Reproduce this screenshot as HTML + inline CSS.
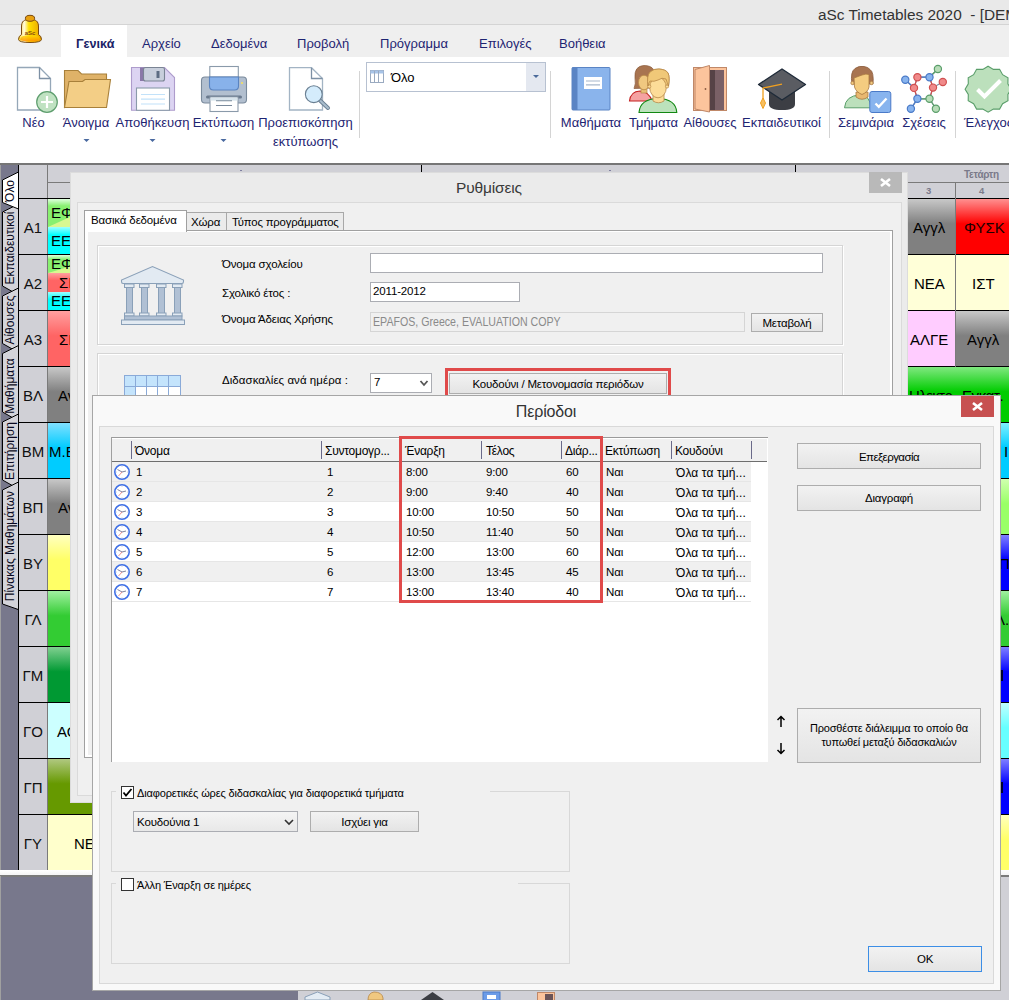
<!DOCTYPE html>
<html><head><meta charset="utf-8">
<style>
*{margin:0;padding:0;box-sizing:border-box}
html,body{width:1009px;height:1000px;overflow:hidden;background:#fff;font-family:"Liberation Sans",sans-serif}
.a{position:absolute}
.t{position:absolute;white-space:nowrap;line-height:1}
.rt{color:#1e2472;font-size:13px}
.c{position:absolute;overflow:hidden;font-size:15px;color:#000;line-height:1;white-space:nowrap}
.ft{position:absolute;font-size:12px;color:#000;white-space:nowrap;line-height:1;letter-spacing:-0.15px}
.btn{position:absolute;border:1px solid #adadad;background:linear-gradient(#f2f2f2,#e4e4e4);font-size:12px;text-align:center;color:#000;line-height:1;white-space:nowrap;letter-spacing:-0.2px}
</style></head>
<body>
<div class="a" style="left:0;top:0;width:1009px;height:25px;background:#e9e9e9;border-bottom:1px solid #d4d4d4"></div>
<div class="t" style="left:818px;top:7px;font-size:15.4px;color:#333">aSc Timetables 2020&nbsp; - [DEMO</div>
<div class="a" style="left:0;top:25px;width:1009px;height:32px;background:#efefef"></div>
<div class="a" style="left:61px;top:25px;width:66px;height:32px;background:#fff"></div>
<div class="t rt" style="left:76px;top:37.5px;font-weight:bold;color:#1a2266;font-size:12.6px">Γενικά</div>
<div class="t rt" style="left:142px;top:37px">Αρχείο</div>
<div class="t rt" style="left:211px;top:37px">Δεδομένα</div>
<div class="t rt" style="left:297px;top:37px">Προβολή</div>
<div class="t rt" style="left:380px;top:37px">Πρόγραμμα</div>
<div class="t rt" style="left:479px;top:37px">Επιλογές</div>
<div class="t rt" style="left:559px;top:37px">Βοήθεια</div>
<div class="a" style="left:0;top:57px;width:1009px;height:106px;background:#fff"></div>
<svg class="a" style="left:0;top:0" width="1009" height="165" viewBox="0 0 1009 165">
<!-- bell -->
<defs>
<linearGradient id="bg1" x1="0" y1="0" x2="1" y2="0"><stop offset="0" stop-color="#f8d020"/><stop offset="0.25" stop-color="#fffbe0"/><stop offset="0.45" stop-color="#ffe000"/><stop offset="1" stop-color="#e8a000"/></linearGradient>
<linearGradient id="bg2" x1="0" y1="0" x2="0" y2="1"><stop offset="0" stop-color="#ffd800"/><stop offset="1" stop-color="#ff8a00"/></linearGradient>
</defs>
<path d="M18.5 39.5 Q18.5 36 21.5 34.5 V27 C21.5 21 24 19.5 30 19.5 C36 19.5 38.5 21 38.5 27 V34.5 Q41.5 36 41.5 39.5 Q41 42.5 30 42.5 Q19 42.5 18.5 39.5 Z" fill="url(#bg1)" stroke="#7a4a10" stroke-width="1"/>
<path d="M20 39.5 Q21 36 25 35.5 H36 Q40 36.5 40 39.5 Q38 41.5 30 41.5 Q22 41.5 20 39.5 Z" fill="url(#bg2)" opacity="0.85"/>
<ellipse cx="30" cy="18.3" rx="4.6" ry="3" fill="#e8a010" stroke="#7a4a10" stroke-width="1"/>
<text x="30" y="35" font-size="6" font-weight="bold" font-family="Liberation Sans" fill="#8a4a10" text-anchor="middle">aSc</text>
<!-- New doc -->
<path d="M17.5 67.5 H39.5 L50.5 78.5 V110 H17.5 Z" fill="#fff" stroke="#95a7b8" stroke-width="1.3"/>
<path d="M39.5 67.5 V78.5 H50.5" fill="none" stroke="#7d90a4" stroke-width="1.3"/>
<circle cx="47" cy="102" r="10.3" fill="#c0e2c2" stroke="#5e9e6e" stroke-width="1.2"/>
<path d="M47 96 V108 M41 102 H53" stroke="#fff" stroke-width="2.2"/>
<!-- folder -->
<path d="M64.5 107.5 V70.5 H78 L81.5 74 H106.5 V80 Z" fill="#dfb268" stroke="#a8803a" stroke-width="1.1"/>
<path d="M64.5 107.5 L69 81.5 H82.5 L85 79.5 H110.5 L106.5 107.5 Z" fill="#f3ce86" stroke="#a8803a" stroke-width="1.1"/>
<!-- floppy -->
<path d="M131.5 67.5 H164.5 L174.5 77.5 V110.3 H131.5 Z" fill="#dcd4f2" stroke="#ae9ccc" stroke-width="1.1"/>
<rect x="140" y="67.5" width="5" height="13.5" fill="#8a78a8"/>
<rect x="143.5" y="67.5" width="21" height="13.5" rx="2" fill="#c8cfdc" stroke="#7a8494" stroke-width="1.1"/>
<rect x="156.5" y="71" width="3" height="7" fill="#5c6c82"/>
<rect x="136.5" y="88" width="33" height="22.3" fill="#fff" stroke="#8a9aaa" stroke-width="1.1"/>
<path d="M141 94.5 H165 M141 99.2 H165 M141 104 H165" stroke="#c2e2fa" stroke-width="1.2"/>
<!-- printer -->
<rect x="209.8" y="66.5" width="28.5" height="12" fill="#fff" stroke="#8a9aaa" stroke-width="1.1"/>
<rect x="201.5" y="77" width="45" height="26" rx="3.5" fill="#b2bfcf" stroke="#7a8a9c" stroke-width="1.1"/>
<path d="M209.5 77 H238.5 V86 Q238.5 90 234.5 90 H213.5 Q209.5 90 209.5 86 Z" fill="#88b2ea" stroke="#5a84c0" stroke-width="1.1"/>
<circle cx="242" cy="83" r="1.1" fill="#f4e060"/>
<rect x="206" y="95.5" width="36" height="3" rx="1.5" fill="#6a7a8e"/>
<rect x="210" y="97" width="28" height="14.5" fill="#fff" stroke="#8a9aaa" stroke-width="1.1"/><rect x="210.6" y="97.6" width="26.8" height="3" fill="#d8e4ec"/>
<path d="M216 100.8 H232 M216 105.5 H232" stroke="#7a8a9c" stroke-width="1.1"/>
<!-- preview -->
<path d="M289.5 67.7 H311.5 L322.5 78.5 V110 H289.5 Z" fill="#fff" stroke="#a3b4c4" stroke-width="1.3"/>
<path d="M311.5 67.7 V78.5 H322.5" fill="none" stroke="#7d90a4" stroke-width="1.3"/>
<path d="M319 99.5 L328 108" stroke="#6a7f92" stroke-width="4" stroke-linecap="round"/>
<path d="M319 99.5 L328 108" stroke="#a8bccc" stroke-width="2.2" stroke-linecap="round"/>
<circle cx="313.8" cy="94.2" r="8.4" fill="#d4ecfc" stroke="#6a7f92" stroke-width="1.1"/>
<!-- separators -->
<rect x="359" y="71" width="1" height="67" fill="#d4d4d4"/>
<rect x="550" y="71" width="1" height="67" fill="#d4d4d4"/>
<rect x="829" y="71" width="1" height="67" fill="#d4d4d4"/>
<rect x="955" y="71" width="1" height="67" fill="#d4d4d4"/>
<!-- combo -->
<rect x="366.5" y="62.5" width="179" height="29" fill="#fff" stroke="#b7c1d1" stroke-width="1"/>
<rect x="526" y="63" width="19" height="28" fill="#e4e8f0"/>
<path d="M533 75 H539 L536 78 Z" fill="#4a6a9a"/>
<rect x="370.5" y="70.5" width="13" height="12" fill="#fff" stroke="#9aaac0" stroke-width="1"/>
<rect x="370.5" y="70.5" width="13" height="3" fill="#a8c4e8"/>
<path d="M374.5 71 V82.5 M378.5 71 V82.5" stroke="#9aaac0" stroke-width="1"/>
<!-- book -->
<rect x="572" y="67.5" width="38" height="42.5" rx="1" fill="#8ab4ec" stroke="#5a84c4" stroke-width="1"/>
<rect x="572" y="67.5" width="5.5" height="42.5" fill="#5a84c4"/>
<rect x="584" y="77" width="18" height="12" fill="#fff"/>
<path d="M586 81 H600 M586 84.8 H600" stroke="#a8b8cc" stroke-width="1.2"/>
<!-- people -->
<path d="M629.5 101 Q630.5 91.5 640 91 Q649 91.5 652 101 Z" fill="#f5a2a2" stroke="#c42020" stroke-width="1.1"/>
<path d="M634 88.5 Q636 84 635 78 Q634 66 644 65.5 Q651 65.5 653.5 69.5 L652 88 Z" fill="#a87450" stroke="#8a5a3a" stroke-width="0.7"/>
<rect x="641" y="88" width="6" height="5" fill="#e8c078" stroke="#b88848" stroke-width="0.7"/>
<ellipse cx="644" cy="82.5" rx="5.5" ry="7.3" fill="#f0c880" stroke="#b88848" stroke-width="0.8"/>
<path d="M639 112.5 Q640 99 658 98.5 Q676 99 676.8 112.5 Z" fill="#bce2bc" stroke="#118811" stroke-width="1.1"/>
<path d="M653 94 V101 Q658.5 104.5 664 101 V94 Z" fill="#fcdc98" stroke="#b88848" stroke-width="0.8"/>
<path d="M648 86 Q646.5 76 650 72 Q654 68.5 659 69 Q666 69.5 668 73 Q670 77 668.5 86 Z" fill="#f0c878" stroke="#b88848" stroke-width="0.8"/>
<ellipse cx="658" cy="87.5" rx="8.3" ry="10.3" fill="#fcdc98" stroke="#b88848" stroke-width="0.8"/>
<circle cx="649.3" cy="86.5" r="1.6" fill="#fcdc98" stroke="#b88848" stroke-width="0.7"/>
<circle cx="667" cy="86.5" r="1.6" fill="#fcdc98" stroke="#b88848" stroke-width="0.7"/>
<path d="M648 86 Q646.5 76 650 72 Q654 68.5 659 69 Q666 69.5 668 73 Q670 77 668.5 86 Q667 82 666 79 Q662 77 658 80 Q654 82 650 81 Q648.5 83 648 86 Z" fill="#f0c878" stroke="#b88848" stroke-width="0.8"/>
<!-- door -->
<rect x="693.5" y="67.5" width="33" height="43" fill="#fcc49c" stroke="#c08868" stroke-width="1"/>
<rect x="710" y="70" width="14" height="40" fill="#7a6066"/>
<rect x="710" y="70" width="5" height="40" fill="#564246"/>
<path d="M695 69.5 L709.5 65.5 V112 L695 109 Z" fill="#fcc49c" stroke="#c08868" stroke-width="1"/>
<circle cx="705.5" cy="89" r="0.9" fill="#8a5a40"/>
<!-- cap -->
<path d="M769 90 V104 Q769 110 782 110 Q795 110 795 104 V90 Z" fill="#3c3e44"/>
<path d="M758.5 84.5 L782 69 L805.5 84.5 L782 100 Z" fill="#5a5c62" stroke="#1e2a38" stroke-width="1.3" stroke-linejoin="round"/>
<path d="M782 84.2 L763 88 V100" fill="none" stroke="#f0a020" stroke-width="1.3"/>
<path d="M763 98 L760.5 103 L763 108.5 L765.5 103 Z" fill="#f8c060" stroke="#f0a020" stroke-width="1"/>
<!-- seminar person -->
<path d="M844.5 107.8 Q845.5 95.5 860 95 Q870 95 871 107.8 Z" fill="#bce0bc" stroke="#5a9e6a" stroke-width="1"/>
<path d="M856 92 V97 Q862 101.5 868 97 V92 Z" fill="#e8b870" stroke="#a87840" stroke-width="0.8"/>
<path d="M852 84 Q850 72 855 68.5 Q859 65.5 864 66.5 Q868 67 870 69.5 Q874 72 873 84 Z" fill="#a87450" stroke="#8a5a3a" stroke-width="0.8"/>
<circle cx="852.5" cy="83" r="1.7" fill="#f0c880" stroke="#a87840" stroke-width="0.7"/>
<circle cx="871.5" cy="83" r="1.7" fill="#f0c880" stroke="#a87840" stroke-width="0.7"/>
<path d="M854 78 Q858 76.5 862 75 Q866 73.5 869 74.5 V87 Q868 92 862 94.5 Q856 92 854.5 87 Z" fill="#f4cc80" stroke="#a87840" stroke-width="0.8"/>
<rect x="869.8" y="91.5" width="21" height="21" rx="2.2" fill="#88b4ee" stroke="#4a7ac8" stroke-width="1"/>
<path d="M875.5 103.5 L878.8 106.8 L886.5 98.5" fill="none" stroke="#fff" stroke-width="2.4"/>
<!-- molecule -->
<g stroke-width="1.2">
<path d="M905.3 79.8 L914 87.9 L917.4 77.2 L929.5 77.2 L933 87.6 L929.5 98.8 L917.4 98.8 L914 87.9 M929.5 77.2 L937.9 69 M933 87.6 L942.8 82 M917.4 98.8 L910.9 108.8 M929.5 98.8 L935.9 108.8" stroke="#7d8ea0" fill="none"/>
<path d="M917.4 77.2 L914 87.9 L917.4 98.8" stroke="#d05050" fill="none"/>
<path d="M929.5 77.2 L933 87.6 L929.5 98.8" stroke="#d05050" fill="none"/>
<path d="M917.4 98.8 L929.5 98.8 L935.9 108.8 M929.5 77.2 L937.9 69" stroke="#5a9e6a" fill="none"/>
<path d="M905.3 79.8 L914 87.9 M917.4 98.8 L910.9 108.8 M917.4 77.2 L929.5 77.2" stroke="#4a7ac8" fill="none"/>
<circle cx="905.3" cy="79.8" r="3.6" fill="#88b4ee" stroke="#4a7ac8"/>
<circle cx="917.4" cy="77.2" r="3.6" fill="#f08a8a" stroke="#d05050"/>
<circle cx="929.5" cy="77.2" r="3.6" fill="#88b4ee" stroke="#4a7ac8"/>
<circle cx="937.9" cy="69" r="3.6" fill="#b8dcb8" stroke="#5a9e6a"/>
<circle cx="914" cy="87.9" r="3.6" fill="#f08a8a" stroke="#d05050"/>
<circle cx="933" cy="87.6" r="3.6" fill="#f08a8a" stroke="#d05050"/>
<circle cx="942.8" cy="82" r="3.6" fill="#f08a8a" stroke="#d05050"/>
<circle cx="917.4" cy="98.8" r="3.6" fill="#88b4ee" stroke="#4a7ac8"/>
<circle cx="929.5" cy="98.8" r="3.6" fill="#b8dcb8" stroke="#5a9e6a"/>
<circle cx="910.9" cy="108.8" r="3.6" fill="#88b4ee" stroke="#4a7ac8"/>
<circle cx="935.9" cy="108.8" r="3.6" fill="#b8dcb8" stroke="#5a9e6a"/>
</g>
<!-- badge -->
<path id="badge" d="M988.1 66.2 L993.4 69.4 L999.6 69.3 L1002.6 74.7 L1008.0 77.7 L1007.9 83.9 L1011.1 89.2 L1007.9 94.5 L1008.0 100.7 L1002.6 103.7 L999.6 109.1 L993.4 109.0 L988.1 112.2 L982.8 109.0 L976.6 109.1 L973.6 103.7 L968.2 100.7 L968.3 94.5 L965.1 89.2 L968.3 83.9 L968.2 77.7 L973.6 74.7 L976.6 69.3 L982.8 69.4 Z" fill="#bce0bc" stroke="#5a9e6a" stroke-width="1.1"/>
<path d="M977.5 89.5 L984.5 96.5 L1000.5 80.5" fill="none" stroke="#fff" stroke-width="4"/>
<!-- dropdown arrows -->
<path d="M83.5 139 H89.5 L86.5 142 Z M149.5 139 H155.5 L152.5 142 Z M220.5 139 H226.5 L223.5 142 Z" fill="#4a6aa0"/>
</svg>

<div class="t" style="left:391px;top:71px;font-size:13px;color:#000">Όλο</div>
<div class="t rt" style="left:-66.5px;width:200px;text-align:center;top:116px">Νέο</div>
<div class="t rt" style="left:-14px;width:200px;text-align:center;top:116px">Άνοιγμα</div>
<div class="t rt" style="left:52.5px;width:200px;text-align:center;top:116px">Αποθήκευση</div>
<div class="t rt" style="left:123.5px;width:200px;text-align:center;top:116px">Εκτύπωση</div>
<div class="t rt" style="left:205.5px;width:200px;text-align:center;top:116px">Προεπισκόπηση</div>
<div class="t rt" style="left:205.5px;width:200px;text-align:center;top:135px">εκτύπωσης</div>
<div class="t rt" style="left:491px;width:200px;text-align:center;top:116px">Μαθήματα</div>
<div class="t rt" style="left:553.5px;width:200px;text-align:center;top:116px">Τμήματα</div>
<div class="t rt" style="left:610px;width:200px;text-align:center;top:116px">Αίθουσες</div>
<div class="t rt" style="left:681.5px;width:200px;text-align:center;top:116px">Εκπαιδευτικοί</div>
<div class="t rt" style="left:766px;width:200px;text-align:center;top:116px">Σεμινάρια</div>
<div class="t rt" style="left:824px;width:200px;text-align:center;top:116px">Σχέσεις</div>
<div class="t rt" style="left:964px;top:116px">Έλεγχος</div>
<div class="a" style="left:0;top:163px;width:1009px;height:2px;background:#767676"></div>
<div class="a" style="left:0;top:165px;width:1009px;height:705px;background:#d0d0d6"></div>
<div class="a" style="left:0;top:165px;width:1px;height:711px;background:#a0a0a0"></div>
<div class="a" style="left:1px;top:165px;width:17px;height:705px;background:#78788c"></div>
<div class="a" style="left:18px;top:165px;width:1px;height:705px;background:#000"></div>
<div class="a" style="left:47px;top:165px;width:1px;height:705px;background:#7a7a7a"></div>
<div class="a" style="left:48px;top:182px;width:961px;height:1px;background:#7a7a7a"></div>
<div class="a" style="left:19px;top:198px;width:990px;height:1px;background:#000"></div>
<div class="t" style="left:19px;width:28px;text-align:center;top:220px;font-size:15px;color:#111">Α1</div>
<div class="a" style="left:19px;top:254px;width:990px;height:1px;background:#000"></div>
<div class="t" style="left:19px;width:28px;text-align:center;top:276px;font-size:15px;color:#111">Α2</div>
<div class="a" style="left:19px;top:310px;width:990px;height:1px;background:#000"></div>
<div class="t" style="left:19px;width:28px;text-align:center;top:332px;font-size:15px;color:#111">Α3</div>
<div class="a" style="left:19px;top:366px;width:990px;height:1px;background:#000"></div>
<div class="t" style="left:19px;width:28px;text-align:center;top:388px;font-size:15px;color:#111">ΒΛ</div>
<div class="a" style="left:19px;top:422px;width:990px;height:1px;background:#000"></div>
<div class="t" style="left:19px;width:28px;text-align:center;top:444px;font-size:15px;color:#111">ΒΜ</div>
<div class="a" style="left:19px;top:478px;width:990px;height:1px;background:#000"></div>
<div class="t" style="left:19px;width:28px;text-align:center;top:500px;font-size:15px;color:#111">ΒΠ</div>
<div class="a" style="left:19px;top:534px;width:990px;height:1px;background:#000"></div>
<div class="t" style="left:19px;width:28px;text-align:center;top:556px;font-size:15px;color:#111">ΒΥ</div>
<div class="a" style="left:19px;top:590px;width:990px;height:1px;background:#000"></div>
<div class="t" style="left:19px;width:28px;text-align:center;top:612px;font-size:15px;color:#111">ΓΛ</div>
<div class="a" style="left:19px;top:646px;width:990px;height:1px;background:#000"></div>
<div class="t" style="left:19px;width:28px;text-align:center;top:668px;font-size:15px;color:#111">ΓΜ</div>
<div class="a" style="left:19px;top:702px;width:990px;height:1px;background:#000"></div>
<div class="t" style="left:19px;width:28px;text-align:center;top:724px;font-size:15px;color:#111">ΓΟ</div>
<div class="a" style="left:19px;top:758px;width:990px;height:1px;background:#000"></div>
<div class="t" style="left:19px;width:28px;text-align:center;top:780px;font-size:15px;color:#111">ΓΠ</div>
<div class="a" style="left:19px;top:814px;width:990px;height:1px;background:#000"></div>
<div class="t" style="left:19px;width:28px;text-align:center;top:836px;font-size:15px;color:#111">ΓΥ</div>
<div class="a" style="left:19px;top:870px;width:990px;height:1px;background:#000"></div>
<div class="c" style="left:48px;top:199px;width:44px;height:28px;background:linear-gradient(#e0ffe0,#88f070 25%)"><span class="a" style="left:0px;top:7px;color:#000"></span></div>
<svg class="a" style="left:48px;top:199px" width="44" height="28"><path d="M0 28 L44 8 V28 Z" fill="#d8f890"/></svg>
<div class="t" style="left:51px;top:205px;font-size:15px;color:#000">ΕΦ</div>
<div class="c" style="left:48px;top:227px;width:44px;height:27px;background:linear-gradient(#a0ffff,#00ffff 30%)"><span class="a" style="left:3px;top:6px;color:#000">ΕΕ</span></div>
<div class="c" style="left:48px;top:255px;width:44px;height:18px;background:linear-gradient(#e0ffe0,#88f070 25%)"><span class="a" style="left:0px;top:2px;color:#000"></span></div>
<svg class="a" style="left:48px;top:255px" width="44" height="18"><path d="M0 18 L44 5 V18 Z" fill="#d8f890"/></svg>
<div class="t" style="left:51px;top:256px;font-size:15px;color:#000">ΕΦ</div>
<div class="c" style="left:48px;top:273px;width:44px;height:19px;background:linear-gradient(#ffa0a0,#ff6464 40%)"><span class="a" style="left:11px;top:2px;color:#000">ΣΙ</span></div>
<div class="c" style="left:48px;top:292px;width:44px;height:18px;background:linear-gradient(#a0ffff,#00ffff 40%)"><span class="a" style="left:3px;top:1px;color:#000">ΕΕ</span></div>
<div class="c" style="left:48px;top:311px;width:44px;height:55px;background:linear-gradient(#ffa0a0,#ff6464 45%)"><span class="a" style="left:11px;top:21px;color:#000">ΣΙ</span></div>
<div class="c" style="left:48px;top:367px;width:44px;height:55px;background:linear-gradient(#c8c8c8,#808080 45%)"><span class="a" style="left:10px;top:21px;color:#000">Αν</span></div>
<div class="c" style="left:48px;top:423px;width:44px;height:55px;background:linear-gradient(#80e0ff,#00ccff 45%)"><span class="a" style="left:1px;top:21px;color:#000">Μ.Ε</span></div>
<div class="c" style="left:48px;top:479px;width:44px;height:55px;background:linear-gradient(#c8c8c8,#808080 45%)"><span class="a" style="left:10px;top:21px;color:#000">Αν</span></div>
<div class="c" style="left:48px;top:535px;width:44px;height:55px;background:linear-gradient(#ffffc0,#ffff66 45%)"><span class="a" style="left:0px;top:21px;color:#000"></span></div>
<div class="c" style="left:48px;top:591px;width:44px;height:55px;background:linear-gradient(#a0f0a0,#33cc33 45%)"><span class="a" style="left:0px;top:21px;color:#000"></span></div>
<div class="c" style="left:48px;top:647px;width:44px;height:55px;background:linear-gradient(#80d090,#009933 45%)"><span class="a" style="left:0px;top:21px;color:#000"></span></div>
<div class="c" style="left:48px;top:703px;width:44px;height:55px;background:#ccffff"><span class="a" style="left:9px;top:21px;color:#000">ΑΟ</span></div>
<div class="c" style="left:48px;top:759px;width:44px;height:55px;background:linear-gradient(#b0c880,#669900 45%)"><span class="a" style="left:0px;top:21px;color:#000"></span></div>
<div class="c" style="left:48px;top:815px;width:44px;height:55px;background:#ffffcc"><span class="a" style="left:26px;top:21px;color:#000">ΝΕ</span></div>
<div class="c" style="left:908px;top:199px;width:47px;height:55px;background:linear-gradient(#c8c8c8,#808080 45%)"><span class="a" style="left:5px;top:21px;color:#000">Αγγλ</span></div>
<div class="c" style="left:956px;top:199px;width:53px;height:55px;background:linear-gradient(#ff9090,#ff0000 45%)"><span class="a" style="left:8px;top:21px;color:#200000">ΦΥΣΚ</span></div>
<div class="c" style="left:908px;top:255px;width:47px;height:55px;background:#ffffd8"><span class="a" style="left:6px;top:21px;color:#000">ΝΕΑ</span></div>
<div class="c" style="left:956px;top:255px;width:53px;height:55px;background:#ffffd8"><span class="a" style="left:16px;top:21px;color:#000">ΙΣΤ</span></div>
<div class="c" style="left:908px;top:311px;width:47px;height:55px;background:#ffccff"><span class="a" style="left:2px;top:21px;color:#000">ΑΛΓΕ</span></div>
<div class="c" style="left:956px;top:311px;width:53px;height:55px;background:linear-gradient(#c8c8c8,#808080 45%)"><span class="a" style="left:11px;top:21px;color:#000">Αγγλ</span></div>
<div class="a" style="left:955px;top:182px;width:1px;height:185px;background:#7a7a7a"></div>
<div class="c" style="left:908px;top:367px;width:101px;height:55px;background:linear-gradient(#80e880,#00cc00 45%)"><span class="a" style="left:0px;top:21px;color:#000"></span></div>
<div class="t" style="left:909px;top:388px;font-size:15px;letter-spacing:-0.6px">Ηλεκτρ.</div>
<div class="t" style="left:962px;top:388px;font-size:15px;letter-spacing:-0.4px">Εγκατ.</div>
<div class="c" style="left:1001px;top:423px;width:8px;height:55px;background:linear-gradient(#80f0ff,#00ccff 45%)"><span class="a" style="left:3px;top:21px;color:#000">Ι</span></div>
<div class="c" style="left:1001px;top:479px;width:8px;height:55px;background:linear-gradient(#d0ffb0,#99ff66 45%)"><span class="a" style="left:0px;top:21px;color:#000"></span></div>
<div class="c" style="left:1001px;top:535px;width:8px;height:55px;background:linear-gradient(#8080ff,#0000ff 45%)"><span class="a" style="left:-2px;top:21px;color:#000">Π</span></div>
<div class="c" style="left:1001px;top:591px;width:8px;height:55px;background:linear-gradient(#a0f0a0,#33cc33 45%)"><span class="a" style="left:-6px;top:21px;color:#000">Λ.</span></div>
<div class="c" style="left:1001px;top:647px;width:8px;height:55px;background:linear-gradient(#8080ff,#0000ff 45%)"><span class="a" style="left:0px;top:21px;color:#000"></span></div>
<div class="c" style="left:1001px;top:703px;width:8px;height:55px;background:linear-gradient(#c0ffff,#66ffff 45%)"><span class="a" style="left:0px;top:21px;color:#000"></span></div>
<div class="c" style="left:1001px;top:759px;width:8px;height:55px;background:linear-gradient(#8080ff,#0000ff 45%)"><span class="a" style="left:0px;top:21px;color:#000"></span></div>
<div class="c" style="left:1001px;top:815px;width:8px;height:55px;background:linear-gradient(#ffffc0,#ffff66 45%)"><span class="a" style="left:0px;top:21px;color:#000"></span></div>
<div class="a" style="left:1001px;top:670px;width:2px;height:11px;background:#000030"></div>
<div class="a" style="left:1001px;top:782px;width:2px;height:11px;background:#000030"></div>
<div class="a" style="left:421px;top:165px;width:1px;height:7px;background:#000"></div>
<div class="a" style="left:795px;top:165px;width:1px;height:7px;background:#000"></div>
<div class="a" style="left:240px;top:170px;width:2px;height:1px;background:#8080a0"></div>
<div class="a" style="left:609px;top:170px;width:2px;height:1px;background:#8080a0"></div>
<div class="t" style="left:964px;top:170px;font-size:10px;font-weight:bold;color:#7a7a8a;letter-spacing:-0.3px">Τετάρτη</div>
<div class="t" style="left:926px;top:186px;font-size:9.5px;font-weight:bold;color:#7a7a8a">3</div>
<div class="t" style="left:979px;top:186px;font-size:9.5px;font-weight:bold;color:#7a7a8a">4</div>
<div class="a" style="left:0;top:870px;width:1009px;height:5px;background:linear-gradient(#fff,#f4f4f4)"></div>
<div class="a" style="left:0;top:875px;width:1009px;height:2px;background:#7a7a7a"></div>
<div class="a" style="left:0;top:877px;width:298px;height:123px;background:#78788c"></div>
<div class="a" style="left:298px;top:877px;width:711px;height:123px;background:#d0d0d6"></div>
<div class="a" style="left:0;top:876px;width:1px;height:124px;background:#a0a0a0"></div>
<svg class="a" style="left:0;top:0" width="20" height="1000" viewBox="0 0 20 1000">
<path d="M18.5 204 L2.5 212 V286 L18.5 295" fill="#d4d4da" stroke="#000" stroke-width="1"/>
<path d="M18.5 288 L2.5 296 V343.5 L18.5 352.5" fill="#d4d4da" stroke="#000" stroke-width="1"/>
<path d="M18.5 345.5 L2.5 353.5 V412 L18.5 421" fill="#d4d4da" stroke="#000" stroke-width="1"/>
<path d="M18.5 414 L2.5 422 V480 L18.5 489" fill="#d4d4da" stroke="#000" stroke-width="1"/>
<path d="M18.5 482 L2.5 490 V604 L18.5 609.6" fill="#d4d4da" stroke="#000" stroke-width="1"/>
<path d="M18.5 172 L2.5 180 V202.5 L18.5 209" fill="#fff" stroke="#000" stroke-width="1"/>
</svg>
<div class="a" style="left:18px;top:165px;width:1px;height:705px;background:#000"></div>
<div class="t" style="left:-90px;width:200px;text-align:center;top:185px;font-size:12px;color:#080820;transform:rotate(-90deg)">Όλο</div>
<div class="t" style="left:-90px;width:200px;text-align:center;top:242px;font-size:12px;color:#080820;transform:rotate(-90deg)">Εκπαιδευτικοί</div>
<div class="t" style="left:-90px;width:200px;text-align:center;top:314px;font-size:12px;color:#080820;transform:rotate(-90deg)">Αίθουσες</div>
<div class="t" style="left:-90px;width:200px;text-align:center;top:380px;font-size:12px;color:#080820;transform:rotate(-90deg)">Μαθήματα</div>
<div class="t" style="left:-90px;width:200px;text-align:center;top:445px;font-size:12px;color:#080820;transform:rotate(-90deg)">Επιτήρηση</div>
<div class="t" style="left:-90px;width:200px;text-align:center;top:540px;font-size:12px;color:#080820;transform:rotate(-90deg)">Πίνακας Μαθημάτων</div>
<svg class="a" style="left:298px;top:991px" width="300" height="9" viewBox="298 991 300 9">
<path d="M305 997 L317.5 992 L330 997 V1000 H305 Z" fill="#e4ecf4" stroke="#8aa0b8" stroke-width="1"/>
<path d="M368 1000 Q368 993 374 992 Q382 992 383 998 V1000 Z" fill="#f0c880" stroke="#b88848" stroke-width="0.8"/>
<path d="M421 1000 L432.5 992 L444 1000 Z" fill="#3c3e44"/>
<rect x="483" y="992" width="17" height="9" fill="#6c9ce8" stroke="#4a7ac8"/><rect x="487" y="995" width="9" height="4" fill="#fff"/>
<rect x="537.5" y="992.5" width="17" height="9" fill="#fcc49c" stroke="#c08868"/><rect x="545" y="994" width="8" height="7" fill="#6a5458"/>
</svg>
<div class="a" style="left:70px;top:172px;width:838px;height:631px;background:#ebebeb;border:1px solid #dcdcdc;"></div>
<div class="ft" style="left:289px;width:400px;text-align:center;top:180px;font-size:15.5px;color:#3a3a3a;">Ρυθμίσεις</div>
<div class="a" style="left:869px;top:172px;width:33px;height:21px;background:#b9b9b9;"></div>
<svg class="a" style="left:869px;top:172px" width="33" height="21"><path d="M12.0 7.0 L21.0 14.0 M21.0 7.0 L12.0 14.0" stroke="#fff" stroke-width="2.6"/></svg>
<div class="a" style="left:77px;top:202px;width:825px;height:594px;background:#f0f0f0;border:1px solid #dadada;"></div>
<div class="a" style="left:186px;top:212px;width:41px;height:19px;background:#ebebeb;border:1px solid #a8a8a8;"></div>
<div class="a" style="left:226px;top:212px;width:118px;height:19px;background:#ebebeb;border:1px solid #a8a8a8;"></div>
<div class="ft" style="left:191px;top:217px;font-size:11.5px;color:#000;">Χώρα</div>
<div class="ft" style="left:232px;top:217px;font-size:11.3px;color:#000;">Τύπος προγράμματος</div>
<div class="a" style="left:84px;top:230px;width:809px;height:528px;background:#fff;border:1px solid #a0a0a0;"></div>
<div class="a" style="left:88px;top:232px;width:802px;height:523px;background:#f0f0f0;"></div>
<div class="a" style="left:84px;top:210px;width:103px;height:22px;background:#fff;border:1px solid #a0a0a0;border-bottom:none"></div>
<div class="ft" style="left:91px;top:215px;font-size:11.5px;color:#000;">Βασικά δεδομένα</div>
<div class="a" style="left:97px;top:245px;width:746px;height:100px;background:none;border:1px solid #d5d5d5;box-shadow:inset 1px 1px 0 #fff,1px 1px 0 #fff"></div>
<div class="a" style="left:97px;top:353px;width:746px;height:47px;background:none;border:1px solid #d5d5d5;box-shadow:inset 1px 1px 0 #fff,1px 1px 0 #fff"></div>
<div class="ft" style="left:222px;top:259px;font-size:11.5px;color:#000;">Όνομα σχολείου</div>
<div class="ft" style="left:222px;top:288px;font-size:11.5px;color:#000;">Σχολικό έτος :</div>
<div class="ft" style="left:222px;top:314px;font-size:11.5px;color:#000;">Όνομα Άδειας Χρήσης</div>
<div class="ft" style="left:222px;top:375px;font-size:11.5px;color:#000;letter-spacing:0.05px">Διδασκαλίες ανά ημέρα :</div>
<div class="a" style="left:370px;top:253px;width:453px;height:20px;background:#fff;border:1px solid #abadb3;"></div>
<div class="a" style="left:370px;top:282px;width:150px;height:20px;background:#fff;border:1px solid #abadb3;"></div>
<div class="ft" style="left:373px;top:286px;font-size:11.5px;color:#000;">2011-2012</div>
<div class="a" style="left:370px;top:312px;width:375px;height:20px;background:#f0f0f0;border:1px solid #d5d5d5;"></div>
<div class="ft" style="left:373px;top:316px;font-size:12px;color:#8a8a8a;letter-spacing:0;transform:scaleX(0.885);transform-origin:0 0">EPAFOS, Greece, EVALUATION COPY</div>
<div class="btn" style="left:751px;top:313px;width:72px;height:19px;border-color:#adadad;font-size:11.5px;padding-top:3.5px">Μεταβολή</div>
<div class="a" style="left:370px;top:373px;width:62px;height:20px;background:#fff;border:1px solid #abadb3;"></div>
<div class="ft" style="left:374px;top:377px;font-size:11.5px;color:#000;">7</div>
<svg class="a" style="left:419px;top:379px" width="10" height="8"><path d="M1.5 2 L5 6 L8.5 2" fill="none" stroke="#555" stroke-width="1.8"/></svg>
<div class="a" style="left:445px;top:368px;width:226px;height:30px;background:none;border:3px solid #e04a4a"></div>
<div class="btn" style="left:449px;top:373px;width:218px;height:21px;border-color:#adadad;font-size:11.5px;padding-top:4.5px">Κουδούνι / Μετονομασία περιόδων</div>
<svg class="a" style="left:118px;top:262px" width="70" height="66" viewBox="118 262 70 66">
<path d="M123 283.5 Q121.5 283.5 121.5 281.5 V280 L152.5 266.5 L183.5 280 V281.5 Q183.5 283.5 182 283.5 Z" fill="#e2eaf2" stroke="#8aa0b8" stroke-width="1.1"/>
<g stroke="#8aa0b8" stroke-width="1">
<rect x="126.5" y="287.5" width="6" height="26" fill="#b0c0d4"/><rect x="141.5" y="287.5" width="6" height="26" fill="#b0c0d4"/><rect x="158.5" y="287.5" width="6" height="26" fill="#b0c0d4"/><rect x="174.5" y="287.5" width="6" height="26" fill="#b0c0d4"/>
<rect x="124.5" y="284" width="9.5" height="3.5" fill="#e2eaf2"/><rect x="139.5" y="284" width="9.5" height="3.5" fill="#e2eaf2"/><rect x="156.5" y="284" width="9.5" height="3.5" fill="#e2eaf2"/><rect x="172.5" y="284" width="9.5" height="3.5" fill="#e2eaf2"/>
<rect x="124.5" y="313" width="9.5" height="3" fill="#e2eaf2"/><rect x="139.5" y="313" width="9.5" height="3" fill="#e2eaf2"/><rect x="156.5" y="313" width="9.5" height="3" fill="#e2eaf2"/><rect x="172.5" y="313" width="9.5" height="3" fill="#e2eaf2"/>
<rect x="124.5" y="316" width="57.5" height="4" fill="#b0c0d4"/>
<rect x="121.5" y="320" width="63" height="4.5" fill="#e2eaf2"/>
</g>
</svg>
<svg class="a" style="left:124px;top:375px" width="58" height="20" viewBox="124 375 58 20">
<rect x="124.5" y="375.5" width="56" height="30" fill="#fff" stroke="#8aaad8" stroke-width="1"/>
<rect x="124.5" y="375.5" width="56" height="11" fill="#c4e4fc" stroke="#8aaad8" stroke-width="1"/>
<rect x="124.5" y="375.5" width="11" height="30" fill="#c4e4fc" stroke="#8aaad8" stroke-width="1"/>
<path d="M135.5 375 V395 M146.5 375 V395 M157.5 375 V395 M168.5 375 V395 M124 386.5 H181" stroke="#8aaad8" stroke-width="1"/>
</svg>
<div class="a" style="left:92px;top:395px;width:909px;height:596px;background:#f9f9f9;border:1px solid #a6a6a6;"></div>
<div class="ft" style="left:346px;width:400px;text-align:center;top:404px;font-size:16px;color:#333;">Περίοδοι</div>
<div class="a" style="left:961px;top:396px;width:33px;height:21px;background:#c75050;"></div>
<svg class="a" style="left:961px;top:396px" width="33" height="21"><path d="M12.0 7.0 L21.0 14.0 M21.0 7.0 L12.0 14.0" stroke="#fff" stroke-width="2.6"/></svg>
<div class="a" style="left:99px;top:426px;width:895px;height:558px;background:#f0f0f0;border:1px solid #d9d9d9;"></div>
<div class="a" style="left:111px;top:437px;width:657px;height:325px;background:#fff;"></div>
<div class="a" style="left:111px;top:437px;width:657px;height:1px;background:#9a9a9a;"></div>
<div class="a" style="left:111px;top:437px;width:1px;height:325px;background:#a0a0a0;"></div>
<div class="a" style="left:112px;top:439px;width:655px;height:22px;background:#f0f0f0;"></div>
<div class="a" style="left:112px;top:461px;width:655px;height:1px;background:#6e6e6e;"></div>
<div class="a" style="left:131px;top:441px;width:1px;height:18px;background:#6a6a8a;"></div>
<div class="a" style="left:321px;top:441px;width:1px;height:18px;background:#6a6a8a;"></div>
<div class="a" style="left:481px;top:441px;width:1px;height:18px;background:#6a6a8a;"></div>
<div class="a" style="left:561px;top:441px;width:1px;height:18px;background:#6a6a8a;"></div>
<div class="a" style="left:671px;top:441px;width:1px;height:18px;background:#6a6a8a;"></div>
<div class="a" style="left:751px;top:441px;width:1px;height:18px;background:#6a6a8a;"></div>
<div class="ft" style="left:135px;top:445px;font-size:12px;color:#000;letter-spacing:-0.25px">Όνομα</div>
<div class="ft" style="left:325px;top:445px;font-size:12px;color:#000;letter-spacing:-0.25px">Συντομογρ...</div>
<div class="ft" style="left:405px;top:445px;font-size:12px;color:#000;letter-spacing:-0.25px">Έναρξη</div>
<div class="ft" style="left:486px;top:445px;font-size:12px;color:#000;letter-spacing:-0.25px">Τέλος</div>
<div class="ft" style="left:565px;top:445px;font-size:12px;color:#000;letter-spacing:-0.25px">Διάρ...</div>
<div class="ft" style="left:605px;top:445px;font-size:12px;color:#000;letter-spacing:-0.25px">Εκτύπωση</div>
<div class="ft" style="left:675px;top:445px;font-size:12px;color:#000;letter-spacing:-0.25px">Κουδούνι</div>
<div class="a" style="left:112px;top:462px;width:639px;height:20px;background:#f0f0f0;"></div>
<div class="a" style="left:112px;top:481px;width:639px;height:1px;background:#e6e6e6;"></div>
<svg class="a" style="left:113px;top:463px" width="18" height="18" viewBox="0 0 18 18"><circle cx="9" cy="9" r="7.2" fill="#fff" stroke="#3f70e6" stroke-width="1.6"/><path d="M9 9 L4.5 6.5 M9 9 L13 8" stroke="#707090" stroke-width="0.9"/><path d="M9 9 L5.5 13" stroke="#e06060" stroke-width="0.7"/><g fill="#c0c0c8"><circle cx="9" cy="3.3" r="0.5"/><circle cx="9" cy="14.7" r="0.5"/><circle cx="3.3" cy="9" r="0.5"/><circle cx="14.7" cy="9" r="0.5"/></g></svg>
<div class="ft" style="left:136px;top:467px;font-size:11.5px;color:#000;">1</div>
<div class="ft" style="left:327px;top:467px;font-size:11.5px;color:#000;">1</div>
<div class="ft" style="left:406px;top:467px;font-size:11.5px;color:#000;">8:00</div>
<div class="ft" style="left:486px;top:467px;font-size:11.5px;color:#000;">9:00</div>
<div class="ft" style="left:566px;top:467px;font-size:11.5px;color:#000;">60</div>
<div class="ft" style="left:606px;top:467px;font-size:11.5px;color:#000;">Ναι</div>
<div class="ft" style="left:676px;top:467px;font-size:12px;color:#000;letter-spacing:0.1px">Όλα τα τμή...</div>
<div class="a" style="left:112px;top:482px;width:639px;height:20px;background:#f0f0f0;"></div>
<div class="a" style="left:112px;top:501px;width:639px;height:1px;background:#e6e6e6;"></div>
<svg class="a" style="left:113px;top:483px" width="18" height="18" viewBox="0 0 18 18"><circle cx="9" cy="9" r="7.2" fill="#fff" stroke="#3f70e6" stroke-width="1.6"/><path d="M9 9 L4.5 6.5 M9 9 L13 8" stroke="#707090" stroke-width="0.9"/><path d="M9 9 L5.5 13" stroke="#e06060" stroke-width="0.7"/><g fill="#c0c0c8"><circle cx="9" cy="3.3" r="0.5"/><circle cx="9" cy="14.7" r="0.5"/><circle cx="3.3" cy="9" r="0.5"/><circle cx="14.7" cy="9" r="0.5"/></g></svg>
<div class="ft" style="left:136px;top:487px;font-size:11.5px;color:#000;">2</div>
<div class="ft" style="left:327px;top:487px;font-size:11.5px;color:#000;">2</div>
<div class="ft" style="left:406px;top:487px;font-size:11.5px;color:#000;">9:00</div>
<div class="ft" style="left:486px;top:487px;font-size:11.5px;color:#000;">9:40</div>
<div class="ft" style="left:566px;top:487px;font-size:11.5px;color:#000;">40</div>
<div class="ft" style="left:606px;top:487px;font-size:11.5px;color:#000;">Ναι</div>
<div class="ft" style="left:676px;top:487px;font-size:12px;color:#000;letter-spacing:0.1px">Όλα τα τμή...</div>
<div class="a" style="left:112px;top:502px;width:639px;height:20px;background:#fff;"></div>
<div class="a" style="left:112px;top:521px;width:639px;height:1px;background:#e6e6e6;"></div>
<svg class="a" style="left:113px;top:503px" width="18" height="18" viewBox="0 0 18 18"><circle cx="9" cy="9" r="7.2" fill="#fff" stroke="#3f70e6" stroke-width="1.6"/><path d="M9 9 L4.5 6.5 M9 9 L13 8" stroke="#707090" stroke-width="0.9"/><path d="M9 9 L5.5 13" stroke="#e06060" stroke-width="0.7"/><g fill="#c0c0c8"><circle cx="9" cy="3.3" r="0.5"/><circle cx="9" cy="14.7" r="0.5"/><circle cx="3.3" cy="9" r="0.5"/><circle cx="14.7" cy="9" r="0.5"/></g></svg>
<div class="ft" style="left:136px;top:507px;font-size:11.5px;color:#000;">3</div>
<div class="ft" style="left:327px;top:507px;font-size:11.5px;color:#000;">3</div>
<div class="ft" style="left:406px;top:507px;font-size:11.5px;color:#000;">10:00</div>
<div class="ft" style="left:486px;top:507px;font-size:11.5px;color:#000;">10:50</div>
<div class="ft" style="left:566px;top:507px;font-size:11.5px;color:#000;">50</div>
<div class="ft" style="left:606px;top:507px;font-size:11.5px;color:#000;">Ναι</div>
<div class="ft" style="left:676px;top:507px;font-size:12px;color:#000;letter-spacing:0.1px">Όλα τα τμή...</div>
<div class="a" style="left:112px;top:522px;width:639px;height:20px;background:#f0f0f0;"></div>
<div class="a" style="left:112px;top:541px;width:639px;height:1px;background:#e6e6e6;"></div>
<svg class="a" style="left:113px;top:523px" width="18" height="18" viewBox="0 0 18 18"><circle cx="9" cy="9" r="7.2" fill="#fff" stroke="#3f70e6" stroke-width="1.6"/><path d="M9 9 L4.5 6.5 M9 9 L13 8" stroke="#707090" stroke-width="0.9"/><path d="M9 9 L5.5 13" stroke="#e06060" stroke-width="0.7"/><g fill="#c0c0c8"><circle cx="9" cy="3.3" r="0.5"/><circle cx="9" cy="14.7" r="0.5"/><circle cx="3.3" cy="9" r="0.5"/><circle cx="14.7" cy="9" r="0.5"/></g></svg>
<div class="ft" style="left:136px;top:527px;font-size:11.5px;color:#000;">4</div>
<div class="ft" style="left:327px;top:527px;font-size:11.5px;color:#000;">4</div>
<div class="ft" style="left:406px;top:527px;font-size:11.5px;color:#000;">10:50</div>
<div class="ft" style="left:486px;top:527px;font-size:11.5px;color:#000;">11:40</div>
<div class="ft" style="left:566px;top:527px;font-size:11.5px;color:#000;">50</div>
<div class="ft" style="left:606px;top:527px;font-size:11.5px;color:#000;">Ναι</div>
<div class="ft" style="left:676px;top:527px;font-size:12px;color:#000;letter-spacing:0.1px">Όλα τα τμή...</div>
<div class="a" style="left:112px;top:542px;width:639px;height:20px;background:#fff;"></div>
<div class="a" style="left:112px;top:561px;width:639px;height:1px;background:#e6e6e6;"></div>
<svg class="a" style="left:113px;top:543px" width="18" height="18" viewBox="0 0 18 18"><circle cx="9" cy="9" r="7.2" fill="#fff" stroke="#3f70e6" stroke-width="1.6"/><path d="M9 9 L4.5 6.5 M9 9 L13 8" stroke="#707090" stroke-width="0.9"/><path d="M9 9 L5.5 13" stroke="#e06060" stroke-width="0.7"/><g fill="#c0c0c8"><circle cx="9" cy="3.3" r="0.5"/><circle cx="9" cy="14.7" r="0.5"/><circle cx="3.3" cy="9" r="0.5"/><circle cx="14.7" cy="9" r="0.5"/></g></svg>
<div class="ft" style="left:136px;top:547px;font-size:11.5px;color:#000;">5</div>
<div class="ft" style="left:327px;top:547px;font-size:11.5px;color:#000;">5</div>
<div class="ft" style="left:406px;top:547px;font-size:11.5px;color:#000;">12:00</div>
<div class="ft" style="left:486px;top:547px;font-size:11.5px;color:#000;">13:00</div>
<div class="ft" style="left:566px;top:547px;font-size:11.5px;color:#000;">60</div>
<div class="ft" style="left:606px;top:547px;font-size:11.5px;color:#000;">Ναι</div>
<div class="ft" style="left:676px;top:547px;font-size:12px;color:#000;letter-spacing:0.1px">Όλα τα τμή...</div>
<div class="a" style="left:112px;top:562px;width:639px;height:20px;background:#f0f0f0;"></div>
<div class="a" style="left:112px;top:581px;width:639px;height:1px;background:#e6e6e6;"></div>
<svg class="a" style="left:113px;top:563px" width="18" height="18" viewBox="0 0 18 18"><circle cx="9" cy="9" r="7.2" fill="#fff" stroke="#3f70e6" stroke-width="1.6"/><path d="M9 9 L4.5 6.5 M9 9 L13 8" stroke="#707090" stroke-width="0.9"/><path d="M9 9 L5.5 13" stroke="#e06060" stroke-width="0.7"/><g fill="#c0c0c8"><circle cx="9" cy="3.3" r="0.5"/><circle cx="9" cy="14.7" r="0.5"/><circle cx="3.3" cy="9" r="0.5"/><circle cx="14.7" cy="9" r="0.5"/></g></svg>
<div class="ft" style="left:136px;top:567px;font-size:11.5px;color:#000;">6</div>
<div class="ft" style="left:327px;top:567px;font-size:11.5px;color:#000;">6</div>
<div class="ft" style="left:406px;top:567px;font-size:11.5px;color:#000;">13:00</div>
<div class="ft" style="left:486px;top:567px;font-size:11.5px;color:#000;">13:45</div>
<div class="ft" style="left:566px;top:567px;font-size:11.5px;color:#000;">45</div>
<div class="ft" style="left:606px;top:567px;font-size:11.5px;color:#000;">Ναι</div>
<div class="ft" style="left:676px;top:567px;font-size:12px;color:#000;letter-spacing:0.1px">Όλα τα τμή...</div>
<div class="a" style="left:112px;top:582px;width:639px;height:20px;background:#fff;"></div>
<div class="a" style="left:112px;top:601px;width:639px;height:1px;background:#e6e6e6;"></div>
<svg class="a" style="left:113px;top:583px" width="18" height="18" viewBox="0 0 18 18"><circle cx="9" cy="9" r="7.2" fill="#fff" stroke="#3f70e6" stroke-width="1.6"/><path d="M9 9 L4.5 6.5 M9 9 L13 8" stroke="#707090" stroke-width="0.9"/><path d="M9 9 L5.5 13" stroke="#e06060" stroke-width="0.7"/><g fill="#c0c0c8"><circle cx="9" cy="3.3" r="0.5"/><circle cx="9" cy="14.7" r="0.5"/><circle cx="3.3" cy="9" r="0.5"/><circle cx="14.7" cy="9" r="0.5"/></g></svg>
<div class="ft" style="left:136px;top:587px;font-size:11.5px;color:#000;">7</div>
<div class="ft" style="left:327px;top:587px;font-size:11.5px;color:#000;">7</div>
<div class="ft" style="left:406px;top:587px;font-size:11.5px;color:#000;">13:00</div>
<div class="ft" style="left:486px;top:587px;font-size:11.5px;color:#000;">13:40</div>
<div class="ft" style="left:566px;top:587px;font-size:11.5px;color:#000;">40</div>
<div class="ft" style="left:606px;top:587px;font-size:11.5px;color:#000;">Ναι</div>
<div class="ft" style="left:676px;top:587px;font-size:12px;color:#000;letter-spacing:0.1px">Όλα τα τμή...</div>
<div class="a" style="left:399px;top:436px;width:204px;height:167px;background:none;border:3px solid #e04a4a"></div>
<div class="btn" style="left:797px;top:443px;width:184px;height:26px;font-size:11.5px;padding-top:7.95px;letter-spacing:-0.55px">Επεξεργασία</div>
<div class="btn" style="left:797px;top:485px;width:184px;height:26px;border-color:#adadad;font-size:11.5px;padding-top:7.0px">Διαγραφή</div>
<svg class="a" style="left:774px;top:714px" width="14" height="44"><path d="M7 2.5 V13 M3.5 6 L7 2.5 L10.5 6" fill="none" stroke="#000" stroke-width="1.5"/><path d="M7 29 V39.5 M3.5 36 L7 39.5 L10.5 36" fill="none" stroke="#000" stroke-width="1.5"/></svg>
<div class="btn" style="left:797px;top:708px;width:184px;height:55px;font-size:11px;line-height:14px;padding-top:12px">Προσθέστε διάλειμμα το οποίο θα<br>τυπωθεί μεταξύ διδασκαλιών</div>
<div class="btn" style="left:868px;top:946px;width:114px;height:26px;border-color:#3c8ee6;font-size:11.5px;padding-top:7.0px">OK</div>
<div class="a" style="left:111px;top:791px;width:459px;height:81px;background:none;border:1px solid #d8d8d8;"></div>
<div class="a" style="left:111px;top:883px;width:459px;height:81px;background:none;border:1px solid #d8d8d8;"></div>
<div class="a" style="left:116px;top:785px;width:374px;height:14px;background:#f0f0f0;"></div>
<div class="a" style="left:116px;top:877px;width:402px;height:14px;background:#f0f0f0;"></div>
<div class="a" style="left:121px;top:786px;width:13px;height:13px;background:#fff;border:1px solid #333;"></div>
<svg class="a" style="left:121px;top:786px" width="13" height="13"><path d="M2.5 6.5 L5 9.5 L10.5 3" fill="none" stroke="#000" stroke-width="1.8"/></svg>
<div class="ft" style="left:137px;top:788px;font-size:11px;color:#000;">Διαφορετικές ώρες διδασκαλίας για διαφορετικά τμήματα</div>
<div class="a" style="left:121px;top:878px;width:13px;height:13px;background:#fff;border:1px solid #333;"></div>
<div class="ft" style="left:137px;top:880px;font-size:11px;color:#000;">Άλλη Έναρξη σε ημέρες</div>
<div class="a" style="left:133px;top:811px;width:165px;height:21px;background:#fff;border:1px solid #abadb3;background:linear-gradient(#f4f4f4,#e8e8e8)"></div>
<div class="ft" style="left:137px;top:817px;font-size:11.5px;color:#000;">Κουδούνια 1</div>
<svg class="a" style="left:284px;top:818px" width="10" height="8"><path d="M1 2 L5 6 L9 2" fill="none" stroke="#333" stroke-width="1.6"/></svg>
<div class="btn" style="left:310px;top:811px;width:109px;height:21px;border-color:#adadad;font-size:11.5px;padding-top:4.5px">Ισχύει για</div>
</body></html>
